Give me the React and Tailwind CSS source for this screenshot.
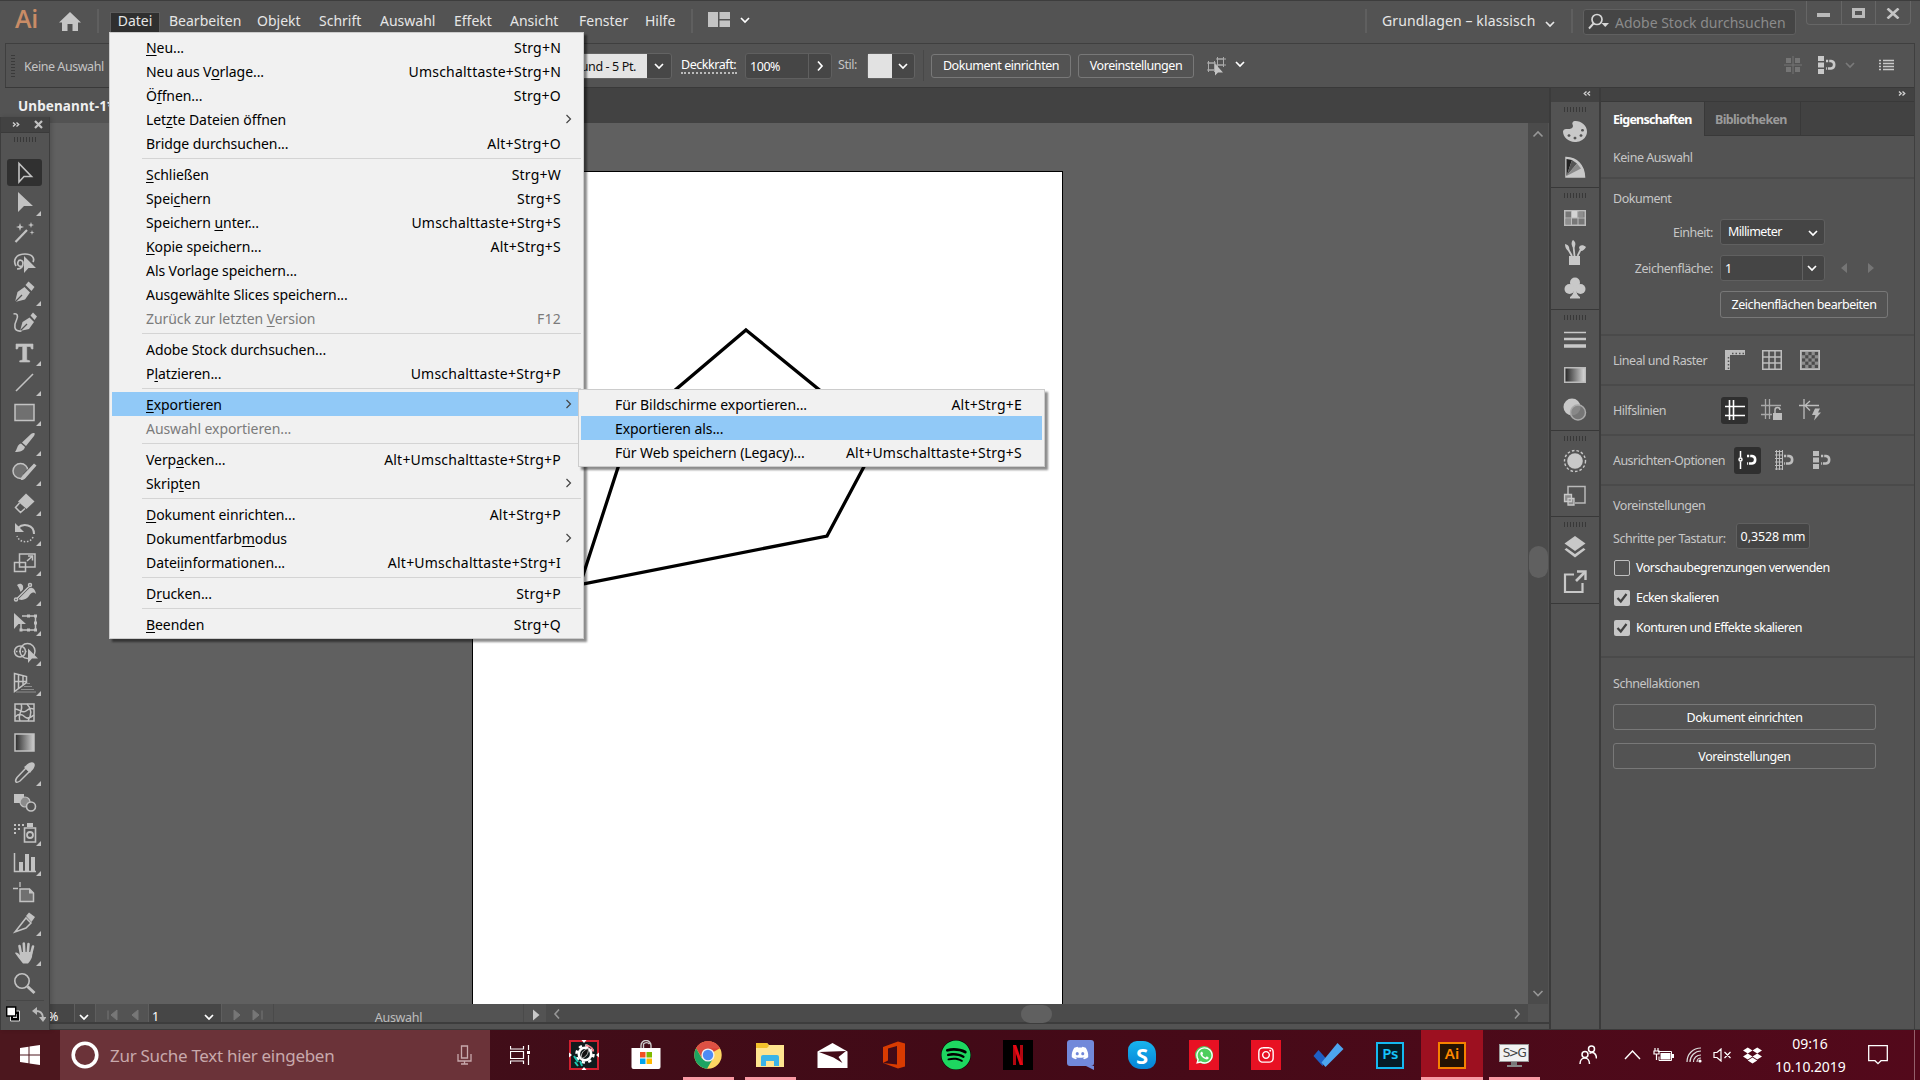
import React from "react";
import { FaSpotify, FaWhatsapp, FaDiscord, FaInstagram, FaDropbox, FaPalette, FaHandPaper } from "react-icons/fa";

/* ---------- helpers ---------- */

function Svg({ w = 24, h, children, className = "" }) {
  const hh = h || w;
  return (
    <svg width={w} height={hh} viewBox={`0 0 ${w} ${hh}`} fill="none" className={`block shrink-0 ${className}`}>
      {children}
    </svg>
  );
}

const Chevron = ({ className = "text-white" }) => (
  <Svg w={12} h={8} className={className}>
    <path d="M2 2l4 4 4-4" stroke="currentColor" strokeWidth="1.700" />
  </Svg>
);

const Grip = () => (
  <div className="flex gap-[2px]">
    {[0, 1, 2, 3, 4, 5, 6, 7].map((i) => (
      <span key={i} className="h-[5px] w-px bg-[#383838]" />
    ))}
  </div>
);

const Divider = ({ className = "" }) => <span className={`w-[2px] shrink-0 bg-[#5f5f5f] ${className}`} />;

/* ---------- title bar ---------- */

const MENUS = [
  ["Bearbeiten", "w-[72px] mr-4"],
  ["Objekt", "w-[44px] mr-[18px]"],
  ["Schrift", "w-[43px] mr-[18px]"],
  ["Auswahl", "w-[57px] mr-[17px]"],
  ["Effekt", "w-[38px] mr-[18px]"],
  ["Ansicht", "w-[50px] mr-[19px]"],
  ["Fenster", "w-[48px] mr-[18px]"],
  ["Hilfe", "w-[32px] mr-[14px]"],
];

function TitleBar() {
  return (
    <header className="flex h-[43px] border-t border-[#3d3d3d] bg-[#535353] text-[14px] text-[#e6e6e6]">
      <span className="ml-[15px] w-[25px] text-[25px] font-semibold leading-[34px] tracking-[-0.2px] text-[#c98c66] [font-family:'Open_Sans',sans-serif]">Ai</span>
      <Svg w={22} h={20} className="ml-[19px] mt-[11px]">
        <path d="M11 0L22 10.500H19V19H13.500V12H8.500V19H3V10.500H0z" fill="#c6c6c6" />
      </Svg>
      <Divider className="ml-4 mt-2 h-6" />
      <span className="ml-[11px] mr-[9px] mt-[11px] h-[20px] w-[50px] border border-b-0 border-[#5c5c5c] bg-[#2f2f2f] text-center leading-[16px]">Datei</span>
      {MENUS.map(([m, c]) => (
        <span key={m} className={`shrink-0 whitespace-nowrap leading-[39px] ${c}`}>{m}</span>
      ))}
      <Divider className="mt-2 h-6" />
      <Svg w={22} h={15} className="ml-[15px] mt-[11px]">
        <path d="M0 0h10v15H0zM11.500 0H22v7H11.500zM11.500 8.500H22V15H11.500z" fill="#c3c3c3" />
      </Svg>
      <div className="ml-[9px] mt-[15px]"><Chevron /></div>
      <div className="ml-auto flex">
        <Divider className="mt-2 h-6" />
        <span className="ml-[15px] w-[153px] whitespace-nowrap leading-[39px] tracking-[0.12px]">Grundlagen – klassisch</span>
        <div className="ml-[9px] mt-[19px]"><Chevron className="text-[#e6e6e6]" /></div>
        <Divider className="ml-[15px] mt-2 h-6" />
        <div className="ml-[10px] mt-2 flex h-[26px] w-[213px] items-center rounded-[3px] border border-[#606060] bg-[#454545] pl-1 text-[#8b8b8b]">
          <Svg w={24} h={18} className="mr-[3px]">
            <circle cx="9" cy="6.500" r="5" stroke="#d6d6d6" strokeWidth="1.700" />
            <path d="M5.500 10.500L1 15.500" stroke="#d6d6d6" strokeWidth="1.900" />
            <path d="M13.500 10h7.500l-3.750 4z" fill="#d6d6d6" />
          </Svg>
          <span className="whitespace-nowrap">Adobe Stock durchsuchen</span>
        </div>
        <div className="ml-[10px] mr-[9px] flex h-[24px] w-[105px] rounded-b-[4px] border border-t-0 border-[#666]">
          <div className="flex flex-1 justify-center border-r border-[#666] pt-[12px]"><span className="h-1 w-[13px] bg-[#b9b9b9]" /></div>
          <div className="flex flex-1 justify-center border-r border-[#666] pt-[7px]"><span className="h-[10px] w-[13px] border-[3px] border-[#b9b9b9]" /></div>
          <div className="flex flex-1 justify-center pt-[7px]">
            <Svg w={14} h={11}><path d="M1.500 0.500l11 10M12.500 0.500l-11 10" stroke="#c4c4c4" strokeWidth="2.600" /></Svg>
          </div>
        </div>
      </div>
    </header>
  );
}

/* ---------- control bar ---------- */

function ControlBar() {
  return (
    <div className="mx-[5px] flex h-[44px] items-center border-x border-t border-[#3f3f3f] bg-[#535353] text-[12.500px] tracking-[-0.45px] text-[#c4c4c4]">
      <div className="ml-[5px] flex flex-col gap-[2px]">
        {[0, 1, 2, 3, 4, 5, 6, 7].map((i) => (<span key={i} className="h-px w-1 bg-[#3a3a3a]" />))}
      </div>
      <span className="ml-[9px] w-[440px] whitespace-nowrap pt-[3px]">Keine Auswahl</span>
      <div className="ml-[90px] flex h-[26px] w-[118px] shrink-0 rounded-[3px] border border-[#636363] bg-[#474747]">
        <div className="w-[92px] whitespace-nowrap bg-[#e4e4e4] pr-[11px] text-right leading-[26px] tracking-[-0.38px] text-[#111] overflow-hidden"><span className="inline-block">und - 5 Pt.</span></div>
        <div className="flex flex-1 items-center justify-center"><Chevron /></div>
      </div>
      <span className="ml-[9px] w-[56px] whitespace-nowrap border-b-2 border-dotted border-[#bbb] leading-[15px] text-white">Deckkraft:</span>
      <div className="ml-[8px] flex h-[26px] w-[87px] rounded-[3px] border border-[#5f5f5f] bg-[#464646] text-white">
        <span className="w-[63px] border-r border-[#5f5f5f] pl-1 leading-[26px]">100%</span>
        <div className="flex flex-1 items-center justify-center">
          <Svg w={8} h={12}><path d="M2 1.500L6 6 2 10.500" stroke="#fff" strokeWidth="1.700" /></Svg>
        </div>
      </div>
      <span className="ml-[6px] w-[29px]">Stil:</span>
      <div className="flex h-[26px] w-[48px] rounded-[3px] border border-[#636363] bg-[#474747]">
        <div className="w-[24px] bg-[#e2e2e2]" />
        <div className="flex flex-1 items-center justify-center"><Chevron /></div>
      </div>
      <span className="ml-2 h-[31px] w-px bg-[#484848]" />
      <PlainButton className="ml-[7px] h-[24px] w-[140px] pt-[2px]">Dokument einrichten</PlainButton>
      <PlainButton className="ml-[7px] h-[24px] w-[116px] pt-[2px]">Voreinstellungen</PlainButton>
      <Svg w={20} h={20} className="ml-[13px]">
        <path d="M1.500 7h6v7h-6zM10.500 3h6v6h-6zM0 7h9M0 14h8M9 3h10M9 9h10M1.500 5v11M7.500 5v11M10.500 1v10M16.500 1v10" stroke="#aaa" strokeWidth="1" />
        <path d="M8 7.500v12l3-3h5z" fill="#c4c4c4" />
      </Svg>
      <div className="ml-[7px] pb-[3px]"><Chevron /></div>
      <div className="ml-auto flex items-center pb-[2px]">
        <Svg w={18} h={18} className="text-[#757575]">
          <path d="M2 2h5v5H2zM11 2h5v5h-5zM2 11h5v5H2zM11 11h5v5h-5z" fill="currentColor" />
          <path d="M9 0v18M0 9h18" stroke="currentColor" />
        </Svg>
        <Magnet className="ml-[15px] text-[#c9c9c9]" />
        <div className="ml-[7px]"><Chevron className="text-[#7a7a7a]" /></div>
        <Svg w={15} h={12} className="ml-[23px] mr-[20px]">
          <path d="M0 1.500h2M0 4.500h2M0 7.500h2M0 10.500h2M4 1.500h11M4 4.500h11M4 7.500h11M4 10.500h11" stroke="#c9c9c9" strokeWidth="1.300" />
        </Svg>
      </div>
    </div>
  );
}

const Magnet = ({ className = "", kind = "blocks" }) => (
  <Svg w={20} h={20} className={className}>
    {kind === "blocks" && <path d="M1 1h6v5H1zM1 7.500h6v5H1zM1 14h6v5H1z" fill="currentColor" />}
    {kind === "point" && (
      <g stroke="currentColor"><path d="M2.500 1v6.500M2.500 11.500V19" strokeWidth="1.500" /><circle cx="2.500" cy="9.500" r="1.500" strokeWidth="1.500" /></g>
    )}
    {kind === "grid" && <path d="M1.500 0v20M4.500 0v20M7.500 0v20M0 1.500h8M0 5h8M0 8.500h8M0 12h8M0 15.500h8M0 19h8" stroke="currentColor" strokeWidth="1" />}
    <path d="M9 6h5a3.800 3.800 0 0 1 0 7.500H9" stroke="currentColor" strokeWidth="2.600" strokeDasharray="2.200 1 15.400 1 3" />
  </Svg>
);

const PlainButton = ({ className = "", children }) => (
  <button className={`flex shrink-0 items-center justify-center whitespace-nowrap rounded-[3px] border border-[#787878] text-white ${className}`}>{children}</button>
);

/* ---------- toolbox ---------- */

const L = "#c2c2c2";
const TOOLS = [
  { n: "select", d: <path d="M7 3.500v18.500l5-5.500h7.500z" stroke={L} strokeWidth="1.600" /> },
  { n: "direct", t: 1, d: <path d="M6 2v20l6-6h9z" fill={L} /> },
  { n: "wand", d: (<g><path d="M3.500 22L15 10" stroke={L} strokeWidth="2.200" /><path d="M8 3l1 3 3 1-3 1-1 3-1-3-3-1 3-1zM19 2l.8 2.200L22 5l-2.200.8L19 8l-.8-2.200L16 5l2.200-.8zM20 10l.6 1.900 1.900.6-1.900.6L20 15l-.6-1.900-1.900-.6 1.900-.6z" fill={L} /></g>) },
  { n: "lasso", d: (<g><path d="M5 19c5 0 6-3 6-6s-4-4-5-1 1 5 4 4M4 16c-3-5-1-12 9-12 7 0 10 4 8 8" stroke={L} strokeWidth="1.700" /><path d="M12 6v17l4.500-5h7.500z" fill={L} /></g>) },
  { n: "pen", t: 1, d: (<g><path d="M3 22l2.500-10 7-5 5.500 5.500-5 7z" fill={L} /><path d="M13.500 5l3-3.500 6 5.500-3 4z" fill={L} /><path d="M3 22l7-7" stroke="#535353" strokeWidth="1.300" /></g>) },
  { n: "curve", d: (<g><path d="M8 21l2.500-9 7-4.500 4.500 4.500-5 7z" fill={L} /><path d="M18.500 5.500l2.500-3 4 4-2.500 3.500z" fill={L} /><path d="M8 21l7-7" stroke="#535353" strokeWidth="1.200" /><path d="M1.500 4c4-1 5 2 3 6s-4 12 5 11" stroke={L} strokeWidth="1.600" /></g>) },
  { n: "type", t: 1, d: <path d="M4 4h17v5h-1.500L18.500 6.500H14.700v13.500l3 .8V22h-10v-1.200l3-.8V6.500H6.500L5.500 9H4z" fill={L} stroke={L} strokeWidth=".6" /> },
  { n: "line", t: 1, d: <path d="M4 21L21 4" stroke={L} strokeWidth="1.600" /> },
  { n: "rect", t: 1, d: <rect x="3" y="4.500" width="19" height="16" fill="#707070" stroke={L} strokeWidth="1.500" /> },
  { n: "brush", t: 1, d: (<g><path d="M22 3c1 0 1 1 0 3l-8 10-4-3.500 9-8.500c1-1 2-1 3-1z" fill={L} /><path d="M9 13.500l4 3.500c-1 4-5 5-10 5 2-2 2-7.500 6-8.500z" fill={L} /></g>) },
  { n: "shaper", t: 1, d: (<g><circle cx="8.500" cy="11" r="7.500" fill="#707070" stroke={L} strokeWidth="1.500" /><path d="M23.500 5L13 16" stroke="#535353" strokeWidth="5.500" /><path d="M22 3.500l2.500 2L14 17.500c-1.500 2-3 2.500-5 2.500 0-2 .5-3.500 2-5z" fill={L} /></g>) },
  { n: "eraser", t: 1, d: (<g><path d="M14 3.500l8.500 8L14.500 19 6 11.500z" fill={L} /><path d="M7.500 13L3.500 17.500l5 5L13 18.500" stroke={L} strokeWidth="1.500" /></g>) },
  { n: "rotate", t: 1, d: (<g><path d="M6 8C11 3 22 4.500 22 14" stroke={L} strokeWidth="2" /><path d="M3 3v9h9z" fill={L} /><path d="M21 17c-2 6-13 7-16-1" stroke={L} strokeWidth="1.500" strokeDasharray="1.500 1.700" /></g>) },
  { n: "scale", t: 1, d: (<g stroke={L} strokeWidth="1.500"><path d="M7.500 4h15.500v13H7.500zM2.500 12.500h11v9h-11z" /><path d="M15 11l5-4.500M16 6h4.500v4.500" /></g>) },
  { n: "width", t: 1, d: (<g><path d="M5 5c4-3 7 0 6 4-1 3 1 4 4 1 3-4 8-3 9 4-3-3-5-1-7 2s-8 6-12 2c3 0 5-2 4-5S7 8 5 5z" fill={L} /><path d="M5 18L16 7" stroke="#535353" strokeWidth="3.500" /><path d="M5 18.500L17 6.500M2.500 19.500a1.500 1.500 0 1 0 3 0 1.500 1.500 0 1 0-3 0zM16.500 5a1.500 1.500 0 1 0 3 0 1.500 1.500 0 1 0-3 0z" stroke={L} strokeWidth="1.500" /></g>) },
  { n: "transform", t: 1, d: (<g><path d="M10 6h13.500v14H9V13" stroke={L} strokeWidth="1.500" /><path d="M22 4.500h3v3h-3zM22 18.500h3v3h-3zM7.500 18.500h3v3h-3zM15 4.500h3v3h-3zM15 18.500h3v3h-3zM22 11.500h3v3h-3z" fill={L} /><path d="M2 3v16l4.500-5H14z" fill={L} /></g>) },
  { n: "builder", t: 1, d: (<g><circle cx="8" cy="11.500" r="5.500" stroke={L} strokeWidth="1.500" /><circle cx="15.500" cy="11" r="7.500" stroke={L} strokeWidth="1.500" /><path d="M4 11.500h12" stroke={L} strokeWidth="1.500" strokeDasharray="1.500 1.500" /><path d="M16 8.500V23l4-4.500h6z" fill={L} /></g>) },
  { n: "perspective", t: 1, d: (<g><path d="M2.500 3.500l12 3v6L2.500 21.500zM6.500 4.500v14M11 6v9M2.500 11.500h12" stroke={L} strokeWidth="1.500" /><path d="M15 13.500h3M12 16.500h8M9 19.500h13M4 22h20" stroke="#8d8d8d" /></g>) },
  { n: "mesh", d: (<g stroke={L} strokeWidth="1.500"><rect x="3" y="4" width="19" height="17" /><path d="M3 9c5 0 7 5 11 2s5-3 8-2M3 17c4-4 7-3 10 0s6 0 9-2M9 4c3 6-4 10-1 17M15 4c6 6 4 12 1 17" /></g>) },
  { n: "gradient", d: (<g><defs><linearGradient id="tg"><stop offset="0" stopColor="#2a2a2a" /><stop offset="1" stopColor="#cfcfcf" /></linearGradient></defs><rect x="3" y="4" width="19" height="17" fill="url(#tg)" stroke={L} strokeWidth="1.500" /></g>) },
  { n: "eyedropper", t: 1, d: (<g><path d="M4 22c-1-1 0-3 1-4.500L14 8l3.500 3.500L8 21c-1.500 1-3 2-4 1z" stroke={L} strokeWidth="1.500" /><path d="M12 7l2-1.500C16 3 20 1 22 3s0 6-2.500 8L18 13z" fill={L} /></g>) },
  { n: "blend", d: (<g><path d="M2 4h10v9H2z" fill={L} /><circle cx="13" cy="12" r="5" fill="#8b8b8b" stroke={L} strokeWidth="1.200" /><circle cx="19" cy="16.500" r="4.500" fill="#535353" stroke={L} strokeWidth="1.600" /></g>) },
  { n: "spray", t: 1, d: (<g><path d="M12.500 8h11v14h-11z" stroke={L} strokeWidth="1.600" /><path d="M15 3h6v4h-6z" fill={L} /><circle cx="18" cy="15" r="3" stroke={L} strokeWidth="1.800" /><path d="M2 5h2M6 5h2M10 5h2M2 9h2M6 9h2M2 13h2" stroke={L} strokeWidth="2" /></g>) },
  { n: "graph", t: 1, d: (<g><path d="M2.500 3v18.500H24" stroke={L} strokeWidth="1.500" /><path d="M7 12h4v9H7zM13 4h4v17h-4zM19 7h4v14h-4z" fill={L} /></g>) },
  { n: "artboard", d: (<g><path d="M8 9h9.500l4 4v8.500H8z" fill="#707070" stroke={L} strokeWidth="1.500" /><path d="M8 2v5M1 8.500h5" stroke={L} strokeWidth="1.300" /><path d="M17 8.500v5h5z" fill={L} /></g>) },
  { n: "slice", t: 1, d: (<g><path d="M3 22L14 8l5 5-5 5z" stroke={L} strokeWidth="1.500" /><path d="M14 6l3-3.500L23 7l-3.500 5z" fill={L} /></g>) },
  { n: "hand", t: 1, d: (<g><path d="M9 14L7.500 6M12.300 13L11.800 3.500M15.800 13L16.500 4M19 14l2-7.500" stroke={L} strokeWidth="2.600" strokeLinecap="round" /><path d="M3 13c1.500-1.200 3 0 5 2V12h12.500L20 17c-1 3-2.500 5-4 6.500h-5C8 20 5.500 16.500 3 13z" fill={L} /></g>) },
  { n: "zoom", d: (<g><circle cx="10" cy="11" r="7.200" stroke={L} strokeWidth="1.600" /><path d="M15.500 16.500L22.500 23" stroke={L} strokeWidth="3" /></g>) },
];

function Toolbox() {
  return (
    <aside className="absolute left-0 top-[117px] flex h-[913px] w-[50px] flex-col border-x border-[#3d3d3d] bg-[#535353] shadow-[2px_0_4px_rgba(0,0,0,0.15)]">
      <div className="flex h-[16px] items-center justify-between border-b border-[#3a3a3a] bg-[#424242] pl-[11px] pr-[6px]">
        <Svg w={8} h={7}><path d="M1 1.500l2.200 2L1 5.500M4.500 1.500l2.200 2-2.200 2" stroke="#cfcfcf" strokeWidth="1.400" /></Svg>
        <Svg w={9} h={9}><path d="M1 1l7 7M8 1L1 8" stroke="#c2c2c2" strokeWidth="2.200" /></Svg>
      </div>
      <div className="flex h-[23px] justify-center pt-[4px]"><Grip /></div>
      <div className="flex flex-col">
        {TOOLS.map((t, i) => (
          <div key={t.n} className="relative flex h-[30px] items-center justify-center">
            {i === 0 && <span className="absolute left-[6px] top-[3px] h-[27px] w-[35px] rounded-[3px] bg-[#303030]" />}
            <Svg w={26} h={26} className="relative translate-y-[2px]">{t.d}</Svg>
            {t.t && <Svg w={5} h={5} className="absolute bottom-0 right-[8px]"><path d="M5 0v5H0z" fill={L} /></Svg>}
          </div>
        ))}
      </div>
      <div className="mx-[5px] mt-[4px] h-px bg-[#474747]" />
      <div className="flex items-start justify-between pl-[5px] pr-[3px] pt-[5px]">
        <Svg w={15} h={16}>
          <path d="M4.500 5h9v10h-9z" fill="#000" stroke="#ddd" /><path d="M7 8h4v4H7z" fill="#ddd" />
          <path d="M.7 1h9v9h-9z" fill="#fff" stroke="#000" strokeWidth="1.400" />
        </Svg>
        <Svg w={14} h={15} className="mt-px"><path d="M3 4c5-.5 8 2 8 7" stroke="#b9b9b9" strokeWidth="2" /><path d="M0 4l5-4v8zM7 10h7.500L11 15z" fill="#b9b9b9" /></Svg>
      </div>
    </aside>
  );
}

/* ---------- work area ---------- */

const SArrow = ({ d, w = 12, h = 12 }) => <Svg w={w} h={h}><path d={d} stroke="#979797" strokeWidth="1.600" /></Svg>;

function WorkArea() {
  return (
    <main className="flex h-[937px] w-[1544px] flex-col border-t border-[#393939]">
      <div className="flex h-[36px] bg-[#424242]">
        <div className="flex w-[130px] items-center border-r border-[#393939] bg-[#535353] pl-[13px] pt-px text-[13.500px] font-bold tracking-[0.1px] text-[#efefef]">Unbenannt-1*</div>
      </div>
      <div className="flex h-[881px]">
        <div className="flex w-[1523px] overflow-hidden bg-[#606060] pl-[467px] pt-[48px]">
          <div className="h-[840px] w-[591px] border border-black bg-white">
            <Svg w={589} h={800}>
              <path d="M273 158L406 266.500 354 364 107 412.500 158 255.500z" stroke="#000" strokeWidth="3.300" />
            </Svg>
          </div>
        </div>
        <div className="flex w-[20px] flex-col items-center bg-[#4b4b4b] pb-[5px] pt-[5px]">
          <SArrow d="M1.500 8.500L6 4l4.500 4.500" />
          <span className="mt-[406px] h-[32px] w-[19px] rounded-full bg-[#606060]" />
          <div className="mt-auto"><SArrow d="M1.500 4L6 8.500 10.500 4" /></div>
        </div>
      </div>
      <div className="flex h-[20px] items-center border-b-2 border-[#3d3d3d] text-[12.500px] tracking-[-0.3px] text-[#bcbcbc]">
        <div className="flex h-full w-[70px] items-center border-r border-[#5e5e5e] bg-[#464646] pl-[43px] pt-[8px] text-white">%</div>
        <div className="flex h-full w-[21px] items-center justify-center border-r border-[#5e5e5e] bg-[#4a4a4a] pr-[2px] pt-[8px]"><Chevron /></div>
        <Svg w={32} h={12} className="ml-[11px] mt-[3px]"><path d="M1 1.500v9M10 1L4 6l6 5zM31 1l-6 5 6 5z" stroke="#777" strokeWidth="1" fill="#777" /></Svg>
        <div className="ml-[9px] flex h-full w-[74px] items-center justify-between border-x border-[#5e5e5e] bg-[#464646] pl-[3px] pr-[6px] pt-[8px] text-white">1<Chevron /></div>
        <Svg w={32} h={12} className="ml-[11px] mt-[3px]"><path d="M1 1l6 5-6 5zM20 1l6 5-6 5zM29 1.500v9" stroke="#777" strokeWidth="1" fill="#777" /></Svg>
        <div className="ml-[8px] h-full w-[251px] border-x border-[#4a4a4a] pt-[5px] text-center leading-[17px]">Auswahl</div>
        <Svg w={8} h={12} className="ml-[8px] mt-[3px]"><path d="M1 0.500L7.500 6 1 11.500z" fill="#c8c8c8" /></Svg>
        <div className="ml-[6px] flex h-full w-[982px] items-center bg-[#4b4b4b] pl-[5px] pr-[5px] pt-px">
          <SArrow d="M8 1.500L4 6l4 4.500" />
          <span className="ml-[458px] h-[18px] w-[31px] rounded-[9px] bg-[#606060]" />
          <div className="ml-auto"><SArrow d="M4 1.500L8 6l-4 4.500" /></div>
        </div>
        <span className="flex-1" />
      </div>
    </main>
  );
}

/* ---------- dock ---------- */

const DOCK = [
  { h: "h-[86px]", icons: [
    <FaPalette key="a" size={24} color="#c8c8c8" className="h-[21px] rotate-180" preserveAspectRatio="none" />,
    <Svg key="b" w={22} h={22}><path d="M2 21V1.500C13 2 20 9 20.500 21z" fill="#c9c9c9" stroke="#c9c9c9" strokeWidth="1.500" /><path d="M2.500 20V3L8 4z" fill="#222" /><path d="M2.500 20L8 4l5 3.500z" fill="#555" /><path d="M2.500 20L13 7.500l4 5z" fill="#8a8a8a" /></Svg>,
  ] },
  { h: "h-[122px]", icons: [
    <Svg key="a" w={22} h={16}><path d="M.75.75h20.500v14.500H.75z" fill="#777" stroke="#bbb" strokeWidth="1.500" /><path d="M7.500 1h6v7h-6z" fill="#d4d4d4" /><path d="M7.500 1v14M14 1v14M1 8h20" stroke="#bbb" /><path d="M2 9h5v5H2zM14.500 2h5v5h-5z" fill="#8e8e8e" /></Svg>,
    <Svg key="b" w={22} h={26}><path d="M5 16h11v9H5z" fill="#c8c8c8" /><path d="M8 16L4 9M10.500 16l-1-10M13.500 16l3.500-7" stroke="#c8c8c8" strokeWidth="1.800" /><path d="M1 4c4 1 5 4 4 7-3-1-4-4-4-7zM9 0c3 2 3 5 1 8-3-2-3-6-1-8zM15 8c0-3 4-4 7-1-1 2-3 4-5 4z" fill="#c8c8c8" /></Svg>,
    <Svg key="c" w={22} h={22}><circle cx="11" cy="5.500" r="5" fill="#c8c8c8" /><circle cx="5.500" cy="12" r="5" fill="#c8c8c8" /><circle cx="16.500" cy="12" r="5" fill="#c8c8c8" /><path d="M10 8h2c0 7 1 10 4 12v1.500H6V20c3-2 4-5 4-12z" fill="#c8c8c8" /></Svg>,
  ] },
  { h: "h-[121px]", icons: [
    <Svg key="a" w={22} h={18}><path d="M0 1.500h22" stroke="#c8c8c8" strokeWidth="1.500" /><path d="M0 8h22" stroke="#c8c8c8" strokeWidth="2.500" /><path d="M0 15h22" stroke="#c8c8c8" strokeWidth="3.500" /></Svg>,
    <Svg key="b" w={22} h={16}><defs><linearGradient id="dg"><stop offset="0" stopColor="#222" /><stop offset="1" stopColor="#ddd" /></linearGradient></defs><rect x=".75" y=".75" width="20.500" height="14.500" fill="url(#dg)" stroke="#bbb" strokeWidth="1.500" /></Svg>,
    <Svg key="c" w={24} h={24}><circle cx="9" cy="9" r="8.500" fill="#c8c8c8" /><circle cx="15" cy="14.500" r="7.500" fill="#7d7d7d" fillOpacity=".85" stroke="#aaa" strokeWidth="1.500" /></Svg>,
  ] },
  { h: "h-[86px]", icons: [
    <Svg key="a" w={24} h={24}><circle cx="12" cy="12" r="7.800" fill="#c8c8c8" /><circle cx="12" cy="12" r="10.500" stroke="#c8c8c8" strokeWidth="1.400" strokeDasharray="2.600 2" /></Svg>,
    <Svg key="b" w={24} h={22}><path d="M5 9V1.500h17V18h-10" stroke="#b9b9b9" strokeWidth="1.500" /><path d="M1.500 9.500h7v7h-7zM5 13.500h6V20H5z" fill="#8b8b8b" stroke="#c8c8c8" strokeWidth="1.300" /></Svg>,
  ] },
  { h: "h-[87px]", icons: [
    <Svg key="a" w={22} h={22}><path d="M11 0l10.500 7.500L11 15 .5 7.500z" fill="#c8c8c8" /><path d="M2.500 12L.5 13.500 11 21.500l10.500-8-2-1.500L11 18z" fill="#c8c8c8" /></Svg>,
    <Svg key="b" w={24} h={24}><path d="M11 4.500H2V22h17.500v-9" stroke="#c8c8c8" strokeWidth="2.200" /><path d="M14 1.500h8.500V10" stroke="#c8c8c8" strokeWidth="2.400" /><path d="M22 2L13 11" stroke="#c8c8c8" strokeWidth="2.600" /></Svg>,
  ] },
];

function Dock() {
  return (
    <div className="flex w-[52px] flex-col border-x-2 border-t border-[#3b3b3b] bg-[#535353]">
      <div className="flex h-[14px] items-start justify-end bg-[#424242] pr-[8px] pt-[2px]">
        <Svg w={8} h={7}><path d="M3.500 1.500L1.300 3.500l2.200 2M7 1.500L4.800 3.500 7 5.500" stroke="#cfcfcf" strokeWidth="1.400" /></Svg>
      </div>
      {DOCK.map((g, i) => (
        <div key={i} className={`flex flex-col items-center border-b-[1.500px] border-[#383838] pt-[5px] ${g.h}`}>
          <Grip />
          <div className="flex flex-col pt-[2px]">
            {g.icons.map((ic, k) => (<div key={k} className="flex h-[35px] items-center justify-center">{ic}</div>))}
          </div>
        </div>
      ))}
    </div>
  );
}

/* ---------- properties ---------- */

const Rule = () => <div className="h-[2px] w-full shrink-0 bg-[#4a4a4a]" />;

const Check = ({ on, children }) => (
  <div className="flex h-[30px] items-center gap-[6px] pl-px tracking-[-0.52px] text-white">
    <span className={on ? "flex h-4 w-4 items-center justify-center rounded-[2px] bg-[#c6c6c6]" : "h-4 w-4 rounded-[2px] border border-[#c0c0c0]"}>
      {on && <Svg w={12} h={12}><path d="M1.500 6l3.300 3.500L10.500 2" stroke="#404040" strokeWidth="2.200" /></Svg>}
    </span>
    <span className="whitespace-nowrap">{children}</span>
  </div>
);

const IconBox = ({ on, children, className = "" }) => (
  <div className={`flex h-[27px] w-[27px] shrink-0 items-center justify-center rounded-[3px] ${on ? "bg-[#2f2f2f] text-white" : "text-[#bdbdbd]"} ${className}`}>{children}</div>
);

function Properties() {
  return (
    <section className="flex w-[313px] flex-col bg-[#535353] text-[12.500px] tracking-[-0.46px] text-[#c6c6c6]">
      <div className="flex h-[15px] items-start justify-end border-y border-[#393939] bg-[#424242] pr-[8px] pt-[2px]">
        <Svg w={8} h={7}><path d="M1 1.500l2.200 2L1 5.500M4.500 1.500l2.200 2-2.200 2" stroke="#cfcfcf" strokeWidth="1.400" /></Svg>
      </div>
      <div className="flex h-[34px] bg-[#424242] text-[12.500px] font-bold tracking-[-0.75px]">
        <span className="w-[103px] bg-[#535353] pl-3 leading-[36px] text-white">Eigenschaften</span>
        <span className="w-[97px] border-x border-b border-[#393939] pl-[10px] leading-[36px] tracking-[-0.65px] text-[#9a9a9a]">Bibliotheken</span>
        <span className="flex-1 border-b border-[#393939]" />
      </div>
      <div className="h-[41px] pl-3 leading-[43px]">Keine Auswahl</div>
      <Rule />
      <div className="flex h-[155px] flex-col pl-3">
        <div className="h-[40px] leading-[39px]">Dokument</div>
        <div className="flex h-[26px]">
          <span className="w-[100px] text-right leading-[27px]">Einheit:</span>
          <div className="ml-[7px] flex w-[105px] items-center justify-between rounded-[3px] border border-[#606060] bg-[#454545] pl-[7px] pr-[5px] pt-px text-white"><span className="tracking-[-0.600px]">Millimeter</span><Chevron /></div>
        </div>
        <div className="mt-[10px] flex h-[26px]">
          <span className="w-[100px] text-right leading-[27px]">Zeichenfläche:</span>
          <div className="ml-[7px] flex w-[105px] rounded-[3px] border border-[#606060] bg-[#454545] text-white">
            <span className="w-[82px] border-r border-[#606060] pl-1 leading-[26px]">1</span>
            <div className="flex flex-1 items-center justify-center pr-1"><Chevron /></div>
          </div>
          <Svg w={34} h={10} className="ml-[16px] mt-2"><path d="M6 0v10L0 5zM27 0v10l6-5z" fill="#757575" /></Svg>
        </div>
        <PlainButton className="ml-[107px] mt-[10px] h-[27px] w-[168px] pt-[2px]">Zeichenflächen bearbeiten</PlainButton>
      </div>
      <Rule />
      <div className="flex h-[48px] items-center pl-3">
        <span className="w-[108px] whitespace-nowrap pt-[2px]">Lineal und Raster</span>
        <IconBox><Svg w={20} h={20}><path d="M0 0h20v5H5v15H0z" fill="currentColor" /><path d="M7 3.500h12M3.500 7v12" stroke="#535353" strokeWidth="1.500" strokeDasharray="1.500 2" /></Svg></IconBox>
        <IconBox className="ml-[10px]"><Svg w={20} h={20}><path d="M.75.75h18.500v18.500H.75zM7 0v20M13 0v20M0 7h20M0 13h20" stroke="currentColor" strokeWidth="1.500" /></Svg></IconBox>
        <IconBox className="ml-[11px]"><Svg w={20} h={20}>
          <rect x=".75" y=".75" width="18.500" height="18.500" fill="#8d8d8d" stroke="currentColor" strokeWidth="1.500" />
          {[0, 1, 2, 3, 4].map((r) => [0, 1, 2].map((c) => (r % 2 && c === 2 ? null : <rect key={`${r}${c}`} x={2 + c * 6.4 + (r % 2) * 3.2} y={2 + r * 3.2} width="3.200" height="3.200" fill="#4c4c4c" />)))}
        </Svg></IconBox>
      </div>
      <Rule />
      <div className="flex h-[48px] items-center pl-3">
        <span className="w-[108px] pt-[2px]">Hilfslinien</span>
        <IconBox on><Svg w={20} h={20}><path d="M4.500 0v20M8.500 0v20M0 6.500h20M0 15.500h20" stroke="currentColor" strokeWidth="1.600" /></Svg></IconBox>
        <IconBox className="ml-[10px]"><Svg w={22} h={22}><path d="M4.500 0v20M8.500 0v20M0 6.500h20M0 15.500h11" stroke="#a8a8a8" strokeWidth="1.300" /><path d="M12 14h9v7h-9z" fill="currentColor" /><path d="M14 14v-3a2.500 2.500 0 0 1 5 0" stroke="currentColor" strokeWidth="1.500" /></Svg></IconBox>
        <IconBox className="ml-[11px]"><Svg w={22} h={22}><path d="M5 0v20M0 6.500h20M11 2L6 6.500l5 5" stroke="currentColor" strokeWidth="1.300" /><path d="M16 9.500h5l-2 4h3l-7 8 1.500-5.500H13z" fill="currentColor" /></Svg></IconBox>
      </div>
      <Rule />
      <div className="flex h-[48px] items-center pl-3">
        <span className="w-[121px] whitespace-nowrap pt-[2px] tracking-[-0.55px]">Ausrichten-Optionen</span>
        <IconBox on><Magnet kind="point" /></IconBox>
        <IconBox className="ml-[10px]"><Magnet kind="grid" /></IconBox>
        <IconBox className="ml-[10px]"><Magnet /></IconBox>
      </div>
      <Rule />
      <div className="flex h-[170px] flex-col pl-3">
        <div className="h-[37px] leading-[39px]">Voreinstellungen</div>
        <div className="flex h-[26px]">
          <span className="w-[123px] whitespace-nowrap leading-[31px]">Schritte per Tastatur:</span>
          <div className="w-[74px] whitespace-nowrap rounded-[3px] border border-[#606060] bg-[#454545] text-center leading-[26px] tracking-[-0.1px] text-white">0,3528 mm</div>
        </div>
        <div className="mt-[4px]">
          <Check>Vorschaubegrenzungen verwenden</Check>
          <Check on>Ecken skalieren</Check>
          <Check on>Konturen und Effekte skalieren</Check>
        </div>
      </div>
      <Rule />
      <div className="flex flex-col pl-3">
        <div className="h-[46px] leading-[52px]">Schnellaktionen</div>
        <PlainButton className="h-[26px] w-[263px] pt-[2px]">Dokument einrichten</PlainButton>
        <PlainButton className="mt-[13px] h-[26px] w-[263px] pt-[2px]">Voreinstellungen</PlainButton>
      </div>
    </section>
  );
}

/* ---------- file menu: "_" precedes the underlined letter ---------- */

const FILE = [
  ["_Neu...", "Strg+N"], ["Neu aus V_orlage...", "Umschalttaste+Strg+N"], ["Ö_ffnen...", "Strg+O"], ["Let_zte Dateien öffnen", ">"], ["Bridge durchsuchen...", "Alt+Strg+O"], null,
  ["_Schließen", "Strg+W"], ["Spei_chern", "Strg+S"], ["Speichern _unter...", "Umschalttaste+Strg+S"], ["_Kopie speichern...", "Alt+Strg+S"], ["Als Vorlage speichern...", ""], ["Ausgewählte Slices speichern...", ""], ["Zurück zur letzten _Version", "F12", "off"], null,
  ["Adobe Stock durchsuchen...", ""], ["P_latzieren...", "Umschalttaste+Strg+P"], null,
  ["_Exportieren", ">", "on"], ["Auswahl exportieren...", "", "off"], null,
  ["Verp_acken...", "Alt+Umschalttaste+Strg+P"], ["Skrip_ten", ">"], null,
  ["_Dokument einrichten...", "Alt+Strg+P"], ["Dokumentfarb_modus", ">"], ["Datei_informationen...", "Alt+Umschalttaste+Strg+I"], null,
  ["D_rucken...", "Strg+P"], null,
  ["_Beenden", "Strg+Q"],
];

const EXPORT = [
  ["Für Bildschirme exportieren...", "Alt+Strg+E"],
  ["Exportieren als...", "", "on"],
  ["Für Web speichern (Legacy)...", "Alt+Umschalttaste+Strg+S"],
];

function Label({ text }) {
  const i = text.indexOf("_");
  if (i < 0) return text;
  return (<>{text.slice(0, i)}<span className="underline underline-offset-2">{text[i + 1]}</span>{text.slice(i + 2)}</>);
}

function Menu({ items, className }) {
  return (
    <div className={`absolute flex flex-col border border-[#ccc] bg-[#f1f1f1] p-[2px] text-[14px] tracking-[-0.07px] text-black shadow-[3px_3px_2px_rgba(0,0,0,0.45)] ${className}`}>
      {items.map((it, i) =>
        it === null ? (
          <div key={i} className="flex h-[7px] items-center pl-[30px]"><span className="h-px w-full bg-[#d4d4d4]" /></div>
        ) : (
          <div key={i} className={`flex h-[24px] items-center justify-between whitespace-nowrap pl-[34px] pr-[20px] ${it[2] === "on" ? "bg-[#91c9f7]" : ""} ${it[2] === "off" ? "text-[#7b7b7b]" : ""}`}>
            <span><Label text={it[0]} /></span>
            {it[1] === ">" ? (
              <Svg w={7} h={10} className="translate-x-[11px]"><path d="M1.500 1l4 4-4 4" stroke="#444" strokeWidth="1.200" /></Svg>
            ) : (<span className="tracking-[0.22px]">{it[1]}</span>)}
          </div>
        )
      )}
    </div>
  );
}

/* ---------- taskbar ---------- */

const APPS = [
  { n: "gear", d: (
    <Svg w={30} h={30}><path d="M1 1h28v28H1z" fill="#101b1d" stroke="#d11f2f" strokeWidth="2" /><path d="M12.500 0h5l-2.500 3zM12.500 30h5L15 27zM0 12.500v5L3 15zM30 12.500v5L27 15z" fill="#fff" />
      <circle cx="16" cy="14" r="6.200" stroke="#fff" strokeWidth="2.600" /><circle cx="16" cy="14" r="8.500" stroke="#fff" strokeWidth="2.500" strokeDasharray="3.340 3.340" />
      <path d="M17 5.500a8.500 8.500 0 0 1 7.500 6" stroke="#f27a86" strokeWidth="1.500" />
      <path d="M12.500 18.500c-1-5 2-9 7-10 0 5-2 8.500-7 10z" fill="#111" stroke="#ddd" strokeWidth=".8" /><path d="M5 16l4 6M6 22l3 4M11 21l2 5" stroke="#1fc8b4" strokeWidth="2" /></Svg>) },
  { n: "store", d: (
    <Svg w={30} h={30}><path d="M10 9V5.500a5 5 0 0 1 10 0V9M12.500 9V4a4 4 0 0 1 6 0" stroke="#ccc" strokeWidth="1.400" /><path d="M.5 8h29v19a2 2 0 0 1-2 2h-25a2 2 0 0 1-2-2z" fill="#fff" /><path d="M9 12h5.500v5.500H9z" fill="#f25022" /><path d="M15.500 12H21v5.500h-5.500z" fill="#7fba00" /><path d="M9 18.500h5.500V24H9z" fill="#00a4ef" /><path d="M15.500 18.500H21V24h-5.500z" fill="#ffb900" /></Svg>) },
  { n: "chrome", bar: 1, d: (
    <Svg w={28} h={28}><circle cx="14" cy="14" r="13.700" fill="#fdd663" /><path d="M14 14L2.100 7.200A13.700 13.700 0 0 1 25.900 7.200z" fill="#db4437" /><path d="M14 7.200h11.900A13.700 13.700 0 0 0 2.100 7.200L8.100 17z" fill="#dd5144" /><path d="M2.100 7.200A13.700 13.700 0 0 0 13 27.700l6-10.300-5-3-6 3z" fill="#1da462" /><circle cx="14" cy="14" r="6.600" fill="#f1f1f1" /><circle cx="14" cy="14" r="5.200" fill="#4c8bf5" /></Svg>) },
  { n: "explorer", bar: 1, d: (
    <Svg w={28} h={24}><path d="M0 0h11l2 2h15v22H0z" fill="#ffe48f" /><path d="M0 0h11l2 3-2 2H0z" fill="#f3c12c" /><path d="M5 23v-9a2 2 0 0 1 2-2h14a2 2 0 0 1 2 2v9h-5v-5h-8v5z" fill="#3ab4e8" /></Svg>) },
  { n: "mail", d: (<Svg w={31} h={25}><path d="M.5 8.500L15.500 0l15 8.500V25H.5z" fill="#fff" /><path d="M2 9l27-1-7.500 6 4 6-9-5.500z" fill="#430b18" /></Svg>) },
  { n: "office", d: (<Svg w={24} h={28}><path d="M1 6L16 .5l7 2v23l-7 2L1 22l14 1.500V5L6 7.500v12L1 22z" fill="#d83b01" /></Svg>) },
  { n: "spotify", d: (<div className="rounded-full bg-black"><FaSpotify size={30} color="#1ed760" /></div>) },
  { n: "netflix", d: (<Svg w={30} h={30}><path d="M0 0h30v30H0z" fill="#000" /><path d="M11.500 5v20M18.500 5v20" stroke="#b1060f" strokeWidth="3" /><path d="M10 5h3.200L20 25h-3.200z" fill="#e50914" /></Svg>) },
  { n: "discord", d: (<div className="flex h-[30px] w-[27px] flex-col items-end"><div className="flex h-[26px] w-[27px] items-center justify-center rounded-[3px] bg-[#7289da]"><FaDiscord size={18} color="#fff" /></div><Svg w={8} h={4}><path d="M0 0h8v4z" fill="#7289da" /></Svg></div>) },
  { n: "skype", d: (<div className="flex h-[28px] w-[28px] items-center justify-center rounded-bl-[13px] rounded-br-[9px] rounded-tl-[9px] rounded-tr-[13px] bg-gradient-to-b from-[#18b4ee] to-[#0883d6] text-[22px] font-bold leading-none text-white">S</div>) },
  { n: "whatsapp", d: (<div className="flex h-[30px] w-[30px] items-center justify-center bg-[#e81123]"><div className="flex h-[18px] w-[18px] items-center justify-center rounded-full bg-[#4fce5d]"><FaWhatsapp size={19} color="#fff" className="shrink-0" /></div></div>) },
  { n: "instagram", d: (<div className="flex h-[30px] w-[30px] items-center justify-center bg-[#e81123]"><FaInstagram size={18} color="#fff" /></div>) },
  { n: "todo", d: (<Svg w={31} h={26}><path d="M5.500 8L14 17.500 9.500 24 .5 14z" fill="#1f5fc4" /><path d="M24.500 1l6 6L12.500 25l-4-4.500z" fill="#4da5ef" /></Svg>) },
  { n: "ps", d: (<div className="flex h-[27px] w-[28px] items-center justify-center border-2 border-[#15b8f0] bg-[#051c26] pb-[3px] text-[15px] font-semibold tracking-[-0.5px] text-[#15c5fa]">Ps</div>) },
  { n: "ai", active: 1, d: (<div className="flex h-[27px] w-[28px] items-center justify-center border-2 border-[#f58200] bg-[#251303] pb-[3px] text-[15px] font-semibold text-[#ff8a00]">Ai</div>) },
  { n: "sg", bar: 1, d: (<div className="flex flex-col items-center"><div className="flex h-[18px] w-[30px] items-center justify-center border border-[#999] bg-[#f2f2f2] text-[12px] leading-none tracking-[-1.500px] text-[#444] [font-family:'DejaVu_Sans',sans-serif]">S&gt;G</div><span className="h-[3px] w-[6px] bg-[#777]" /><span className="h-[2px] w-[15px] bg-[#888]" /></div>) },
];

function Taskbar() {
  return (
    <footer className="flex h-[50px] items-stretch bg-gradient-to-r from-[#40101a] via-[#420a17] to-[#53091b] text-white">
      <div className="flex w-[60px] items-center justify-center bg-[#4c171e]">
        <Svg w={20} h={20}><path d="M0 3l8.500-1.200V9.500H0zM9.500 1.600L20 0v9.500H9.500zM0 10.500h8.500v7.800L0 17zM9.500 10.500H20V20L9.500 18.400z" fill="#fff" /></Svg>
      </div>
      <div className="flex w-[430px] items-center bg-[#6b3339] pl-[11px] pr-[18px] text-[17px] tracking-[-0.28px] text-[#c8a9ac]">
        <Svg w={28} h={28} className="mr-[11px]"><circle cx="14" cy="14" r="11.800" stroke="#fff" strokeWidth="3.600" /></Svg>
        <span className="whitespace-nowrap pt-px">Zur Suche Text hier eingeben</span>
        <Svg w={15} h={20} className="ml-auto"><path d="M4.500 1h6v12h-6zM1 9v7h13V9M7.500 16v3M4 19h7" stroke="#c8a9ac" strokeWidth="1.300" /></Svg>
      </div>
      <div className="flex w-[63px] items-center pl-[20px]">
        <Svg w={21} h={20}><path d="M.500 1v3h13V1M.500 19v-3h13v3M.500 6.500h13v7H.500zM18.500 0v5M18.500 10v10" stroke="#fff" strokeWidth="1.200" /><path d="M17 6h3v3h-3z" fill="#fff" /></Svg>
      </div>
      <div className="flex">
        {APPS.map((a) => (
          <div key={a.n} className={`relative flex w-[62px] items-center justify-center ${a.active ? "bg-[#9d1020]" : ""}`}>
            {a.d}
            {a.bar && <span className="absolute bottom-0 left-[6px] h-[3px] w-[51px] bg-[#f99aa4]" />}
            {a.active && <span className="absolute bottom-0 left-0 h-[3px] w-full bg-[#f99aa4]" />}
          </div>
        ))}
      </div>
      <div className="ml-[34px] flex flex-1 items-center">
        <Svg w={18} h={20}><g stroke="#fff" strokeWidth="1.500"><circle cx="12.500" cy="4" r="3" /><circle cx="6" cy="9.500" r="3" /><path d="M1 19c0-8 9.500-8 9.500 0M10.500 8.500c4-3 7 1 7 5" /></g></Svg>
        <Svg w={17} h={10} className="ml-[27px]"><path d="M1 9l7.500-8L16 9" stroke="#fff" strokeWidth="1.400" /></Svg>
        <Svg w={21} h={14} className="ml-[12px]"><path d="M5 3.500h13.500v9H6v-4" stroke="#fff" /><path d="M7.500 5h10v6.500h-10zM19 6h2v4h-2z" fill="#fff" /><path d="M2 0v3M5 0v3M1 3h5v3H1zM3.500 6v6" stroke="#fff" strokeWidth="1.200" /></Svg>
        <Svg w={17} h={16} className="ml-[12px]"><g stroke="#ddd" strokeWidth="1.200"><path d="M1 15C1 7 7 1 15 1" /><path d="M4 15C4 9 9 4 15 4" /><path d="M7.500 15c0-4 3-7 7.500-7" /><path d="M11 15c0-2 1.500-4 4-4" /></g><circle cx="14" cy="14" r="1.600" fill="#fff" /></Svg>
        <Svg w={19} h={14} className="ml-[10px]"><path d="M1 4.500h3L8 1v12L4 9.500H1zM11.500 4l6 6M17.500 4l-6 6" stroke="#fff" strokeWidth="1.200" /></Svg>
        <FaDropbox size={19} className="ml-[11px]" />
        <div className="ml-[13px] w-[70px] whitespace-nowrap text-center text-[14px] leading-[23px] tracking-[-0.1px]">09:16<br />10.10.2019</div>
        <Svg w={20} h={20} className="ml-[23px]"><path d="M.700.700h18.600v15H13l-3 3-3-3H.700z" stroke="#fff" strokeWidth="1.300" /></Svg>
        <span className="ml-auto mr-[5px] h-full w-px bg-[#94606b]" />
      </div>
    </footer>
  );
}

export default function App() {
  return (
    <div className="relative flex h-[1080px] w-[1920px] flex-col overflow-hidden bg-[#535353] [font-family:'Noto_Sans','Open_Sans',sans-serif]">
      <TitleBar />
      <ControlBar />
      <div className="flex h-[943px] border-b border-[#3b3b3b] pl-[5px]">
        <WorkArea />
        <Dock />
        <Properties />
        <span className="w-px bg-[#3f3f3f]" />
      </div>
      <Taskbar />
      <Toolbox />
      <Menu items={FILE} className="left-[109px] top-[32px] w-[475px]" />
      <Menu items={EXPORT} className="left-[578px] top-[389px] w-[467px]" />
    </div>
  );
}
